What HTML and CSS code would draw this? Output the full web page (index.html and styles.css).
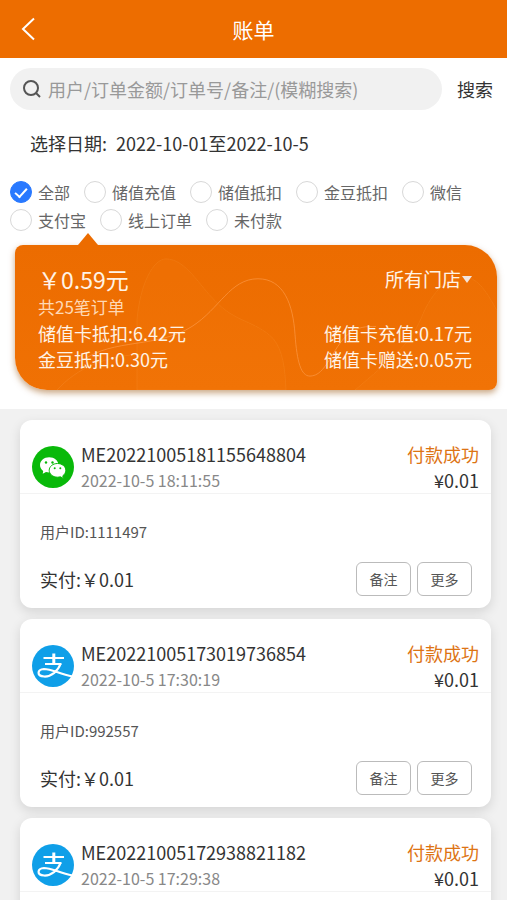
FILE: index.html
```html
<!DOCTYPE html>
<html lang="zh-CN">
<head>
    <meta charset="UTF-8">
    <meta name="viewport" content="width=device-width, initial-scale=1.0">
    <title>账单</title>
    <link rel="stylesheet" href="styles.css">
</head>
<body>
    <svg class="symbols" aria-hidden="true">
        <symbol id="wechat" viewBox="0 0 42 42">
            <circle cx="21" cy="21" r="21" fill="#09b90a"/>
            <path fill="#fff" d="M17.2 11.3c-5.200 0-9.200 3.400-9.200 7.700 0 2.400 1.200 4.500 3.200 5.900l-.5 2.900 3.300-1.800c1 .3 2.100.5 3.200.5 5.100 0 9.200-3.400 9.200-7.600s-4.100-7.600-9.200-7.600z"/>
            <path fill="#fff" stroke="#09b90a" stroke-width="1" d="M25.500 17.500c-4.600 0-8.300 3-8.300 6.800s3.700 6.900 8.300 6.900c1 0 2-.2 2.900-.4l2.900 1.600-.5-2.600c1.900-1.300 3-3.300 3-5.500 0-3.800-3.700-6.800-8.300-6.800z"/>
            <circle cx="14" cy="16.500" r="1.200" fill="#09b90a"/>
            <circle cx="20.500" cy="16.500" r="1.200" fill="#09b90a"/>
            <circle cx="22.700" cy="22.300" r="1" fill="#09b90a"/>
            <circle cx="28.300" cy="22.300" r="1" fill="#09b90a"/>
        </symbol>
        <symbol id="alipay" viewBox="0 0 42 42">
            <circle cx="21" cy="21" r="21" fill="#0f9fe8"/>
            <g fill="none" stroke="#fff">
                <path stroke-width="1.800" d="M11.500 13h20.500M13 19h16.500"/>
                <path stroke-width="3" d="M21.800 8.500v10.500"/>
                <path stroke-width="2.200" d="M28.500 19C26 26 19 32 12 31.500 4.500 31 5 24.500 12 24c8 0 15 5 28.500 7.500"/>
            </g>
        </symbol>
    </svg>

    <header class="header">
        <a href="#" class="back-btn" aria-label="返回">
            <svg width="14" height="24" viewBox="0 0 14 24"><path d="M13 1.500L2 12l11 10.500"/></svg>
        </a>
        <h1>账单</h1>
    </header>

    <main>
        <section class="filters">
            <form class="search">
                <label class="search-box">
                    <svg width="18" height="18" viewBox="0 0 18 18"><circle cx="8" cy="8" r="7"/><path d="M13 13l4 4"/></svg>
                    <input type="text" aria-label="搜索" placeholder="用户/订单金额/订单号/备注/(模糊搜索)">
                </label>
                <button type="button" class="search-btn">搜索</button>
            </form>

            <div class="date-row">
                <span>选择日期:</span>
                <button type="button">2022-10-01至2022-10-5</button>
            </div>

            <div class="types">
                <label><input type="radio" name="type" checked>全部</label>
                <label><input type="radio" name="type">储值充值</label>
                <label><input type="radio" name="type">储值抵扣</label>
                <label><input type="radio" name="type">金豆抵扣</label>
                <label><input type="radio" name="type">微信</label>
                <label><input type="radio" name="type">支付宝</label>
                <label><input type="radio" name="type">线上订单</label>
                <label><input type="radio" name="type">未付款</label>
            </div>

            <div class="summary">
                <svg class="waves" viewBox="0 0 482 146" preserveAspectRatio="none" aria-hidden="true">
                    <path class="wave-fill" d="M122 146V75C125 40 138 14 151 14c20 0 34 28 49 42 20 22 40 20 58 38 10 12 12 30 13 52z"/>
                    <path class="wave-fill" d="M340 146c35-30 55-46 66-72 12-30 28-42 44-42 14 2 22 16 32 34v80z"/>
                    <path class="wave-line" d="M68 116c30-22 75-12 109-34 28-18 38-48 66-48 26 0 35 26 37 56 2 28 6 42 15 42 16 0 22-28 38-42 10-8 18-8 28-8"/>
                    <path class="wave-faint" d="M42 146c20-22 50-36 90-36"/>
                </svg>
                <div class="summary-row total">
                    <strong>￥0.59元</strong>
                    <label class="store">
                        <select aria-label="门店"><option>所有门店</option></select>
                    </label>
                </div>
                <p class="count">共25笔订单</p>
                <div class="summary-row">
                    <span>储值卡抵扣:6.42元</span>
                    <span>储值卡充值:0.17元</span>
                </div>
                <div class="summary-row">
                    <span>金豆抵扣:0.30元</span>
                    <span>储值卡赠送:0.05元</span>
                </div>
            </div>
        </section>

        <section class="orders">
            <article class="order">
                <div class="order-head">
                    <svg class="pay-icon"><use href="#wechat"/></svg>
                    <div class="order-info">
                        <h2>ME20221005181155648804</h2>
                        <time>2022-10-5 18:11:55</time>
                    </div>
                    <div class="order-status">
                        <p class="status">付款成功</p>
                        <p>¥0.01</p>
                    </div>
                </div>
                <div class="order-body">
                    <p class="user-id">用户ID:1111497</p>
                    <div class="order-foot">
                        <span class="paid">实付:￥0.01</span>
                        <button type="button">备注</button>
                        <button type="button">更多</button>
                    </div>
                </div>
            </article>

            <article class="order">
                <div class="order-head">
                    <svg class="pay-icon"><use href="#alipay"/></svg>
                    <div class="order-info">
                        <h2>ME20221005173019736854</h2>
                        <time>2022-10-5 17:30:19</time>
                    </div>
                    <div class="order-status">
                        <p class="status">付款成功</p>
                        <p>¥0.01</p>
                    </div>
                </div>
                <div class="order-body">
                    <p class="user-id">用户ID:992557</p>
                    <div class="order-foot">
                        <span class="paid">实付:￥0.01</span>
                        <button type="button">备注</button>
                        <button type="button">更多</button>
                    </div>
                </div>
            </article>

            <article class="order">
                <div class="order-head">
                    <svg class="pay-icon"><use href="#alipay"/></svg>
                    <div class="order-info">
                        <h2>ME20221005172938821182</h2>
                        <time>2022-10-5 17:29:38</time>
                    </div>
                    <div class="order-status">
                        <p class="status">付款成功</p>
                        <p>¥0.01</p>
                    </div>
                </div>
                <div class="order-body"></div>
            </article>
        </section>
    </main>
</body>
</html>
```
FILE: styles.css
```css
* {
    margin: 0;
    padding: 0;
    box-sizing: border-box;
}

body {
    display: flex;
    flex-direction: column;
    height: 100vh;
    font-family: 'Noto Sans CJK SC', sans-serif;
    font-size: 18px;
    line-height: 26px;
    background: #f1f1f1;
    color: #333333;
}

main {
    flex: 1;
    min-height: 0;
    overflow-y: auto;
    scrollbar-width: none;
}

button,
input,
select {
    font: inherit;
    color: inherit;
    background: none;
    border: none;
    outline: none;
}

.symbols {
    position: absolute;
    width: 0;
    height: 0;
}

.header {
    flex: none;
    display: grid;
    grid-template-columns: 1fr auto 1fr;
    align-items: center;
    height: 58px;
    padding: 0 21px;
    background: #ed6d00;
    color: #ffffff;
}

.header h1 {
    font-size: 21px;
    font-weight: 400;
}

.back-btn {
    display: flex;
}

.back-btn svg {
    fill: none;
    stroke: #ffffff;
    stroke-width: 2;
}

.filters {
    padding: 10px 10px 19px;
    background: #ffffff;
}

.search {
    display: flex;
    align-items: center;
    gap: 15px;
    padding-right: 4px;
}

.search-box {
    flex: 1;
    display: flex;
    align-items: center;
    gap: 7px;
    height: 42px;
    padding: 0 13px;
    border-radius: 21px;
    background: #f1f1f1;
}

.search-box svg {
    flex: none;
    fill: none;
    stroke: #555555;
    stroke-width: 2;
}

.search-box input {
    flex: 1;
    min-width: 0;
}

.search-box input::placeholder {
    color: #999999;
}

.date-row {
    display: flex;
    gap: 9px;
    padding: 20px 20px 22px;
}

.types {
    display: flex;
    flex-wrap: wrap;
    column-gap: 14px;
    font-size: 16px;
    line-height: 28px;
    color: #666666;
}

.types label {
    display: flex;
    align-items: center;
    gap: 6px;
}

.types input {
    appearance: none;
    width: 22px;
    height: 22px;
    border: 1px solid #d8d8d8;
    border-radius: 50%;
    display: grid;
    place-items: center;
}

.types input:checked {
    background: #2979ff;
    border-color: #2979ff;
}

.types input:checked::after {
    content: "";
    width: 10px;
    height: 5px;
    border: solid #ffffff;
    border-width: 0 0 2px 2px;
    transform: translateY(-1px) rotate(-48deg);
}

.summary {
    position: relative;
    margin: 11px 0 0 5px;
    padding: 18px 25px 18px 23px;
    border-radius: 8px 32px 8px 32px;
    background: linear-gradient(#ec6c00, #f07104);
    box-shadow: 0 3px 6px rgba(150, 80, 10, 0.5);
    color: #fff3e6;
}

.summary::before {
    content: "";
    position: absolute;
    left: 63px;
    bottom: 100%;
    border: 10px solid transparent;
    border-top: none;
    border-bottom: 12px solid #ec6c00;
}

.waves {
    position: absolute;
    inset: 0;
    width: 100%;
    height: 100%;
    border-radius: inherit;
}

.wave-fill {
    fill: rgba(255, 140, 30, 0.1);
    stroke: rgba(255, 170, 90, 0.15);
}

.wave-line {
    fill: none;
    stroke: rgba(255, 160, 80, 0.6);
}

.wave-faint {
    fill: none;
    stroke: rgba(255, 170, 90, 0.2);
}

.summary-row {
    position: relative;
    display: flex;
    justify-content: space-between;
}

.total {
    line-height: 32px;
}

.total strong {
    font-size: 23px;
    font-weight: 400;
}

.store {
    display: flex;
    align-items: center;
    font-size: 19px;
}

.store select {
    appearance: none;
}

.store::after {
    content: "";
    border: 5px solid transparent;
    border-top: 7px solid #f3e4dc;
    border-bottom: none;
}

.count {
    position: relative;
    padding-bottom: 1px;
    font-size: 17px;
    line-height: 24px;
    color: #ffd9b5;
}

.orders {
    display: grid;
    gap: 11px;
    padding: 11px 16px 11px 20px;
}

.order {
    border-radius: 12px;
    background: #ffffff;
    box-shadow: 0 4px 12px rgba(0, 0, 0, 0.12);
}

.order-head {
    display: flex;
    align-items: center;
    gap: 7px;
    padding: 21px 12px 0;
    border-bottom: 1px solid #f3f3f3;
}

.pay-icon {
    flex: none;
    width: 42px;
    height: 42px;
}

.order-info {
    flex: 1;
}

.order-info h2 {
    font-size: 18px;
    font-weight: 400;
}

.order-info time {
    display: block;
    font-size: 16px;
    color: #888888;
}

.order-status {
    text-align: right;
}

.status {
    color: #dd7414;
}

.order-body {
    padding: 26px 19px 12px 20px;
}

.user-id {
    font-size: 15px;
    line-height: 24px;
    color: #555555;
}

.order-foot {
    display: flex;
    align-items: center;
    gap: 6px;
    margin-top: 18px;
}

.paid {
    flex: 1;
}

.order-foot button {
    width: 55px;
    height: 34px;
    border: 1px solid #bbbbbb;
    border-radius: 6px;
    font-size: 14px;
    color: #555555;
}
```
